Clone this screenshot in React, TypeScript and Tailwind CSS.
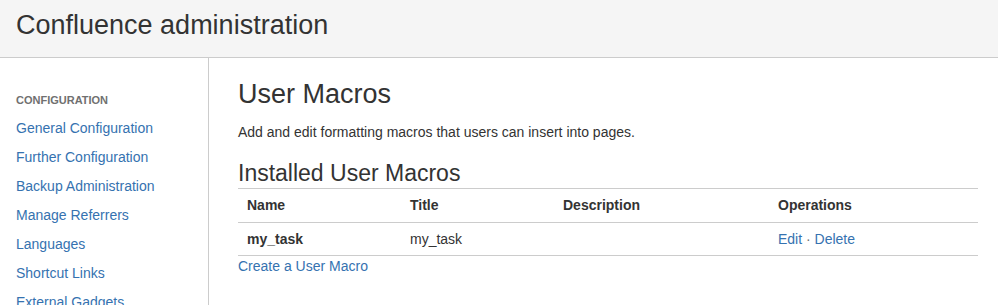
const navLinks = [
  "General Configuration",
  "Further Configuration",
  "Backup Administration",
  "Manage Referrers",
  "Languages",
  "Shortcut Links",
  "External Gadgets",
];

const macros = [{ name: "my_task", title: "my_task", description: "" }];

export default function App() {
  return (
    <div className="h-[305px] w-[998px] overflow-hidden bg-white text-[#333] font-['Liberation_Sans',Arial,sans-serif]">
      <header className="h-[58px] border-b border-[#ccc] bg-[#f5f5f5] px-4">
        <h1 className="pt-[5px] text-[27px] leading-[40px] text-[#333]">Confluence administration</h1>
      </header>

      <div className="flex">
        <nav className="h-[247px] w-[209px] shrink-0 border-r border-[#ccc] px-4 pt-[32px]">
          <h5 className="text-[11px] font-bold uppercase leading-[20px] text-[#707070]">Configuration</h5>
          <ul className="mt-[4px]">
            {navLinks.map((link) => (
              <li key={link} className="text-[14px] leading-[29px] text-[#3572b0]">
                <a href="#">{link}</a>
              </li>
            ))}
          </ul>
        </nav>

        <main className="flex-1 pl-[29px] pr-[20px] pt-[18px]">
          <h2 className="text-[27px] leading-[36px] text-[#333]">User Macros</h2>
          <p className="mt-[10px] text-[14px] leading-[20px]">
            Add and edit formatting macros that users can insert into pages.
          </p>
          <h3 className="mt-[16px] text-[23px] leading-[30px] text-[#333]">Installed User Macros</h3>

          <div className="w-[740px] text-[14px]">
            <div className="grid grid-cols-[163px_153px_215px_1fr] border-y border-[#ccc] px-[9px] font-bold leading-[33px]">
              <div>Name</div>
              <div>Title</div>
              <div>Description</div>
              <div>Operations</div>
            </div>
            {macros.map((m) => (
              <div
                key={m.name}
                className="grid grid-cols-[163px_153px_215px_1fr] border-b border-[#ccc] px-[9px] leading-[32px]"
              >
                <div className="font-bold">{m.name}</div>
                <div>{m.title}</div>
                <div>{m.description}</div>
                <div>
                  <a href="#" className="text-[#3572b0]">Edit</a>
                  <span className="text-[#707070]"> · </span>
                  <a href="#" className="text-[#3572b0]">Delete</a>
                </div>
              </div>
            ))}
          </div>
          <a href="#" className="block text-[14px] leading-[20px] text-[#3572b0]">Create a User Macro</a>
        </main>
      </div>
    </div>
  );
}
